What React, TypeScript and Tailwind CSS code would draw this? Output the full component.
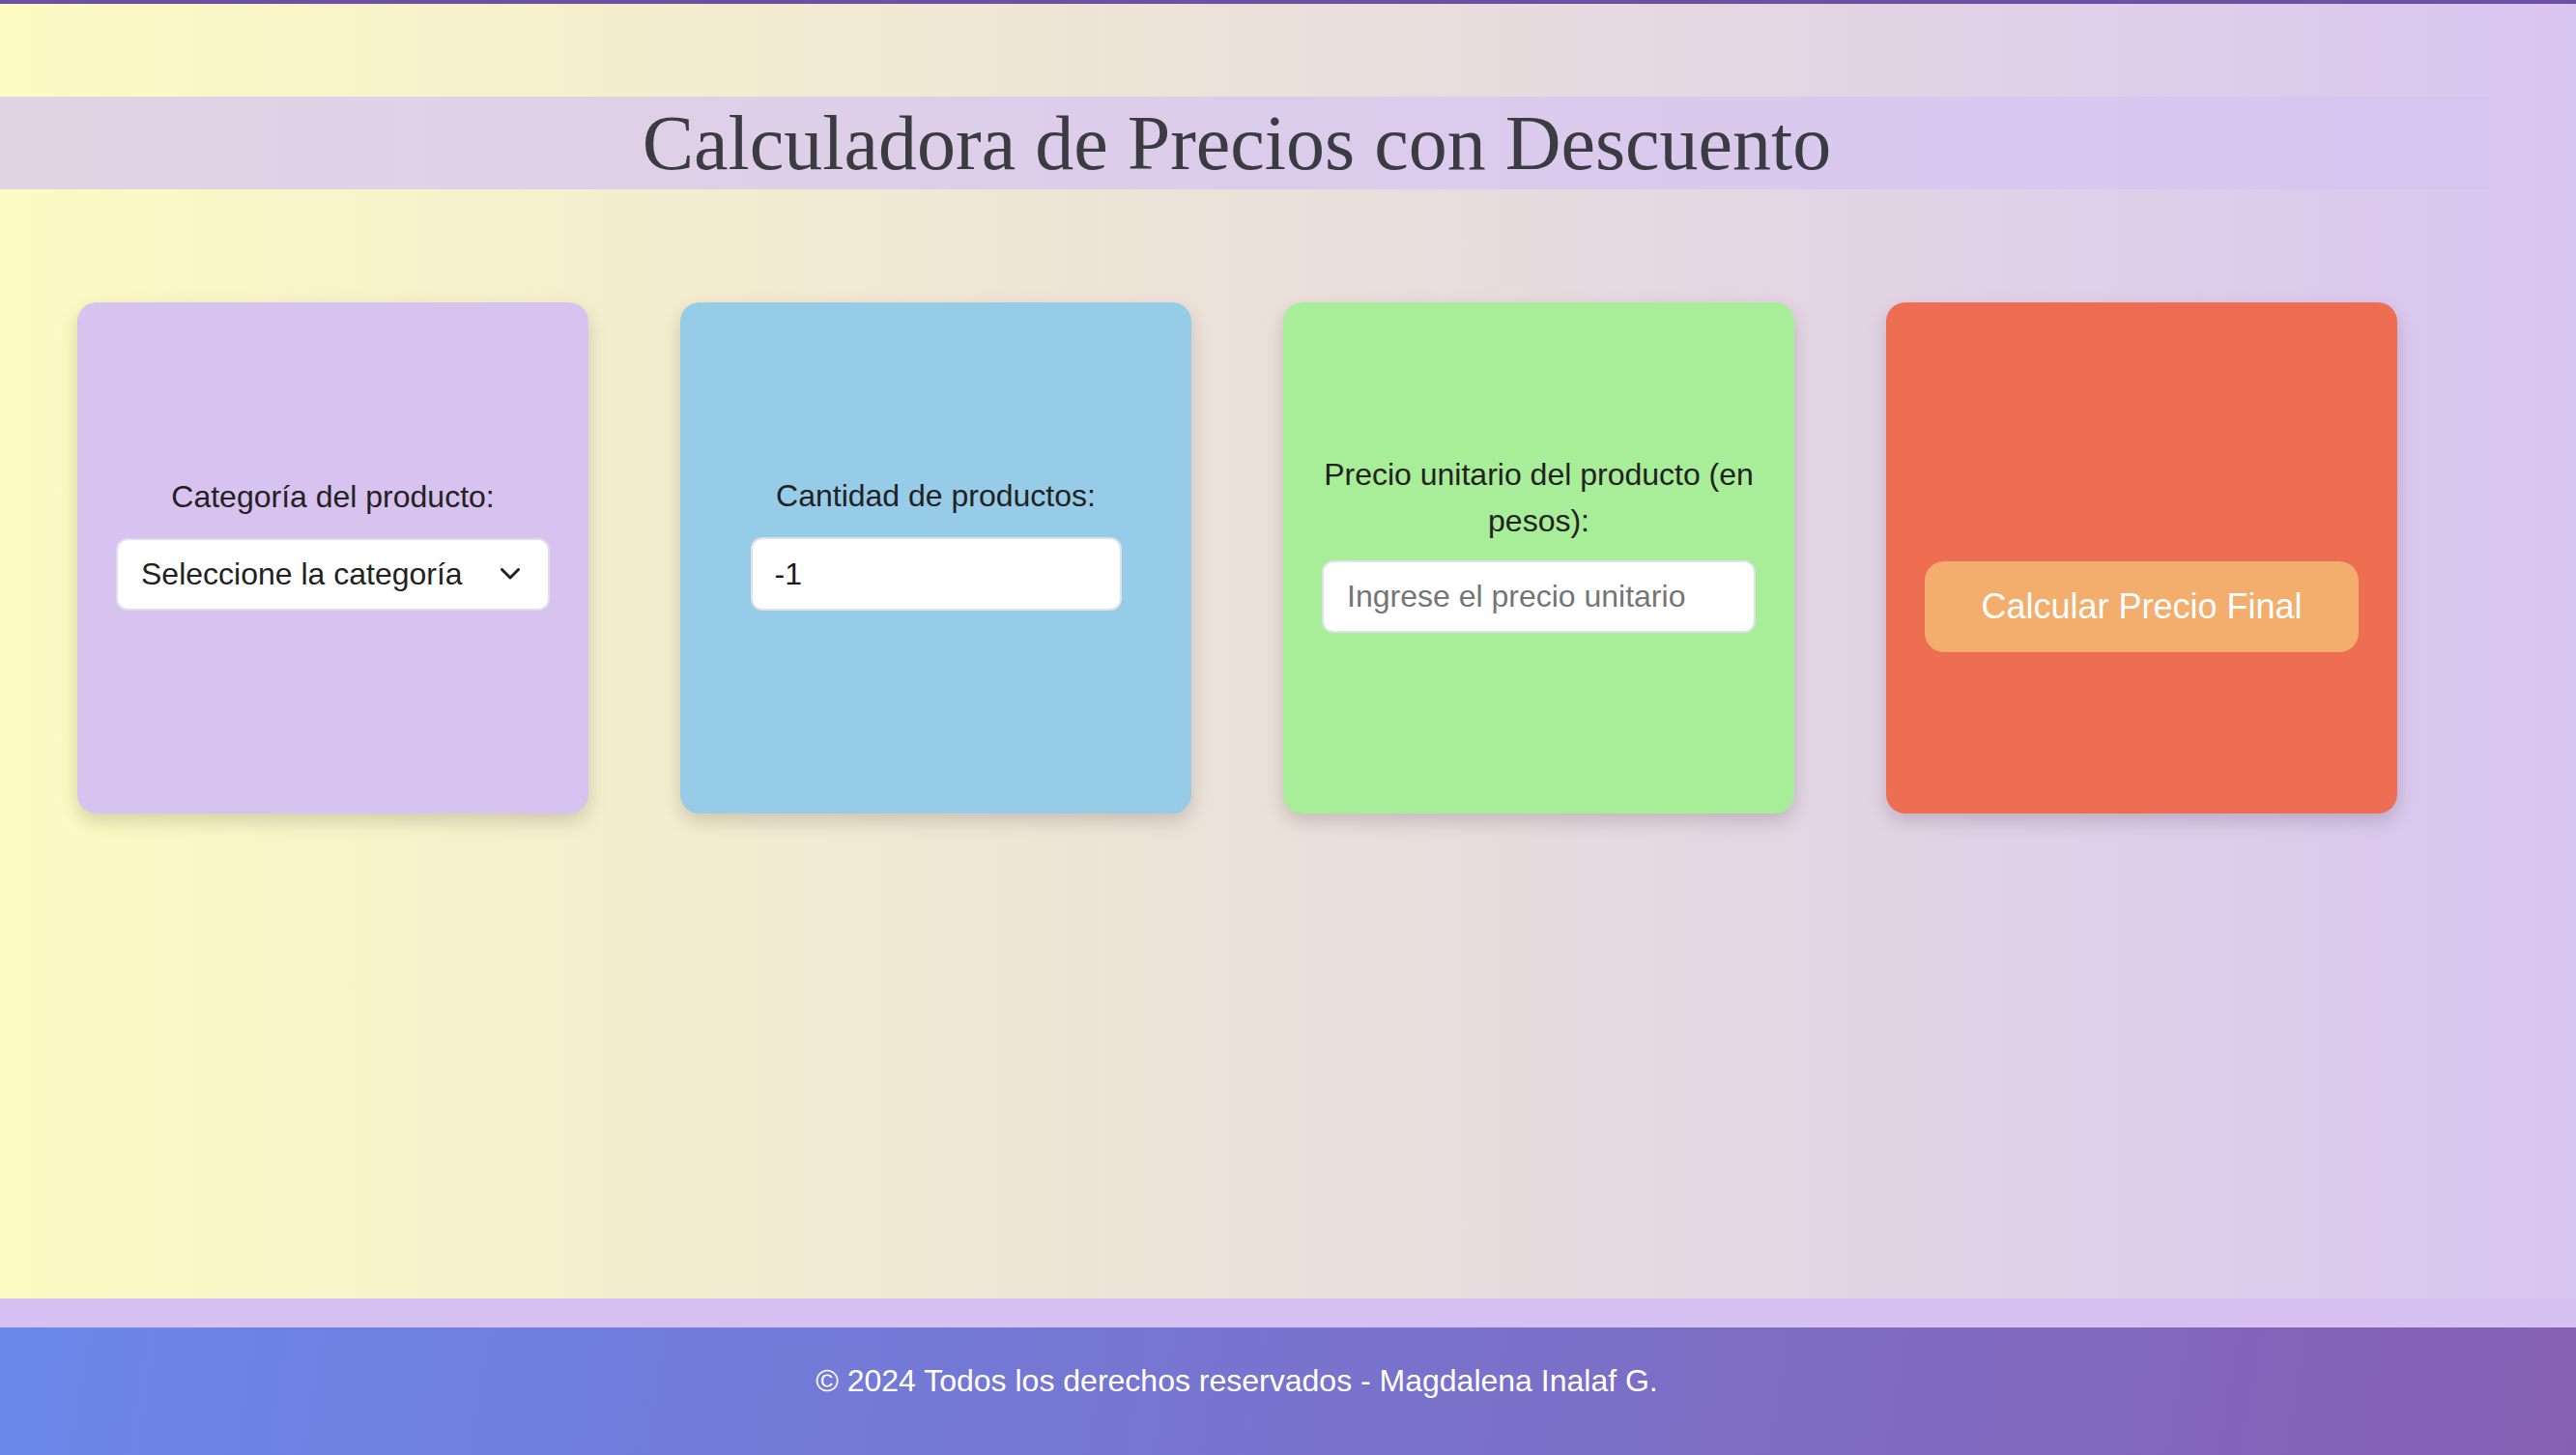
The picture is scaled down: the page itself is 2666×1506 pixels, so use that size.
import React from 'react'

// Price calculator landing: title band, four coloured cards, footer

const Chevron: React.FC = () => (
    <svg width="20" height="12" viewBox="0 0 20 12" fill="none">
        <polyline points="1.5,1.5 10,10 18.5,1.5" stroke="#222" strokeWidth="3" strokeLinecap="round" strokeLinejoin="round" />
    </svg>
)

const cardBase = 'flex h-[529px] w-[529px] shrink-0 flex-col items-center justify-center rounded-[20px] px-[40px] shadow-[0_8px_20px_rgba(0,0,0,0.16)]'

export default function App() {
    return (
        <div className="min-h-screen bg-[#d6c1f2] font-['Liberation_Sans',Arial,sans-serif] text-[#222]">
            <div className="h-[1344px] border-t-4 border-[#6d4fa3] bg-[linear-gradient(to_right,#fdfbc3,#d9c5f1)]">
                {/* Title band */}
                <header className="mt-[96px] flex h-[96px] w-[2576px] items-center justify-center bg-[rgba(214,195,242,0.7)] pr-[16px]">
                    <h1 className="font-['Liberation_Serif','Times_New_Roman',serif] text-[80px] leading-none text-[#3b3c42]">
                        Calculadora de Precios con Descuento
                    </h1>
                </header>

                {/* Cards */}
                <main className="mt-[117px] flex gap-[95px] pl-[80px]">
                    <div className={`${cardBase} bg-[#d8c2f0]`}>
                        <div className="mb-[34px] flex w-full flex-col items-center">
                            <label className="mb-[19px] text-center text-[32px] leading-[48px]">Categoría del producto:</label>
                            <div className="flex h-[75px] w-full items-center justify-between rounded-[12px] border-2 border-[#e3ddea] bg-white pl-[24px] pr-[29px] text-[32px]">
                                <span>Seleccione la categoría</span>
                                <Chevron />
                            </div>
                        </div>
                    </div>

                    <div className={`${cardBase} bg-[#97cce8]`}>
                        <div className="mb-[34px] flex w-full flex-col items-center">
                            <label className="mb-[19px] text-center text-[32px] leading-[48px]">Cantidad de productos:</label>
                            <input
                                type="text"
                                defaultValue="-1"
                                className="h-[76px] w-[384px] rounded-[12px] border-2 border-[#dde2e8] bg-white pl-[23px] text-[32px] text-[#1a1a1a] outline-none"
                            />
                        </div>
                    </div>

                    <div className={`${cardBase} bg-[#a8ed98]`}>
                        <div className="mb-[34px] flex w-full flex-col items-center">
                            <label className="mb-[17px] text-center text-[32px] leading-[48px]">Precio unitario del producto (en pesos):</label>
                            <input
                                type="text"
                                placeholder="Ingrese el precio unitario"
                                className="h-[75px] w-full rounded-[12px] border-2 border-[#dde2e8] bg-white pl-[24px] text-[32px] outline-none placeholder:text-[#757575]"
                            />
                        </div>
                    </div>

                    <div className={`${cardBase} bg-[#ed6e53]`}>
                        <button className="mt-[101px] h-[94px] w-full rounded-[20px] bg-[#f3ae6e] text-[36px] text-white">
                            Calcular Precio Final
                        </button>
                    </div>
                </main>
            </div>

            <footer className="mt-[30px] h-[132px] bg-[linear-gradient(100deg,#6a87e9,#8660b3)] pt-[31px] text-[32px] text-white">
                <p className="w-[2560px] text-center">© 2024 Todos los derechos reservados - Magdalena Inalaf G.</p>
            </footer>
        </div>
    )
}
